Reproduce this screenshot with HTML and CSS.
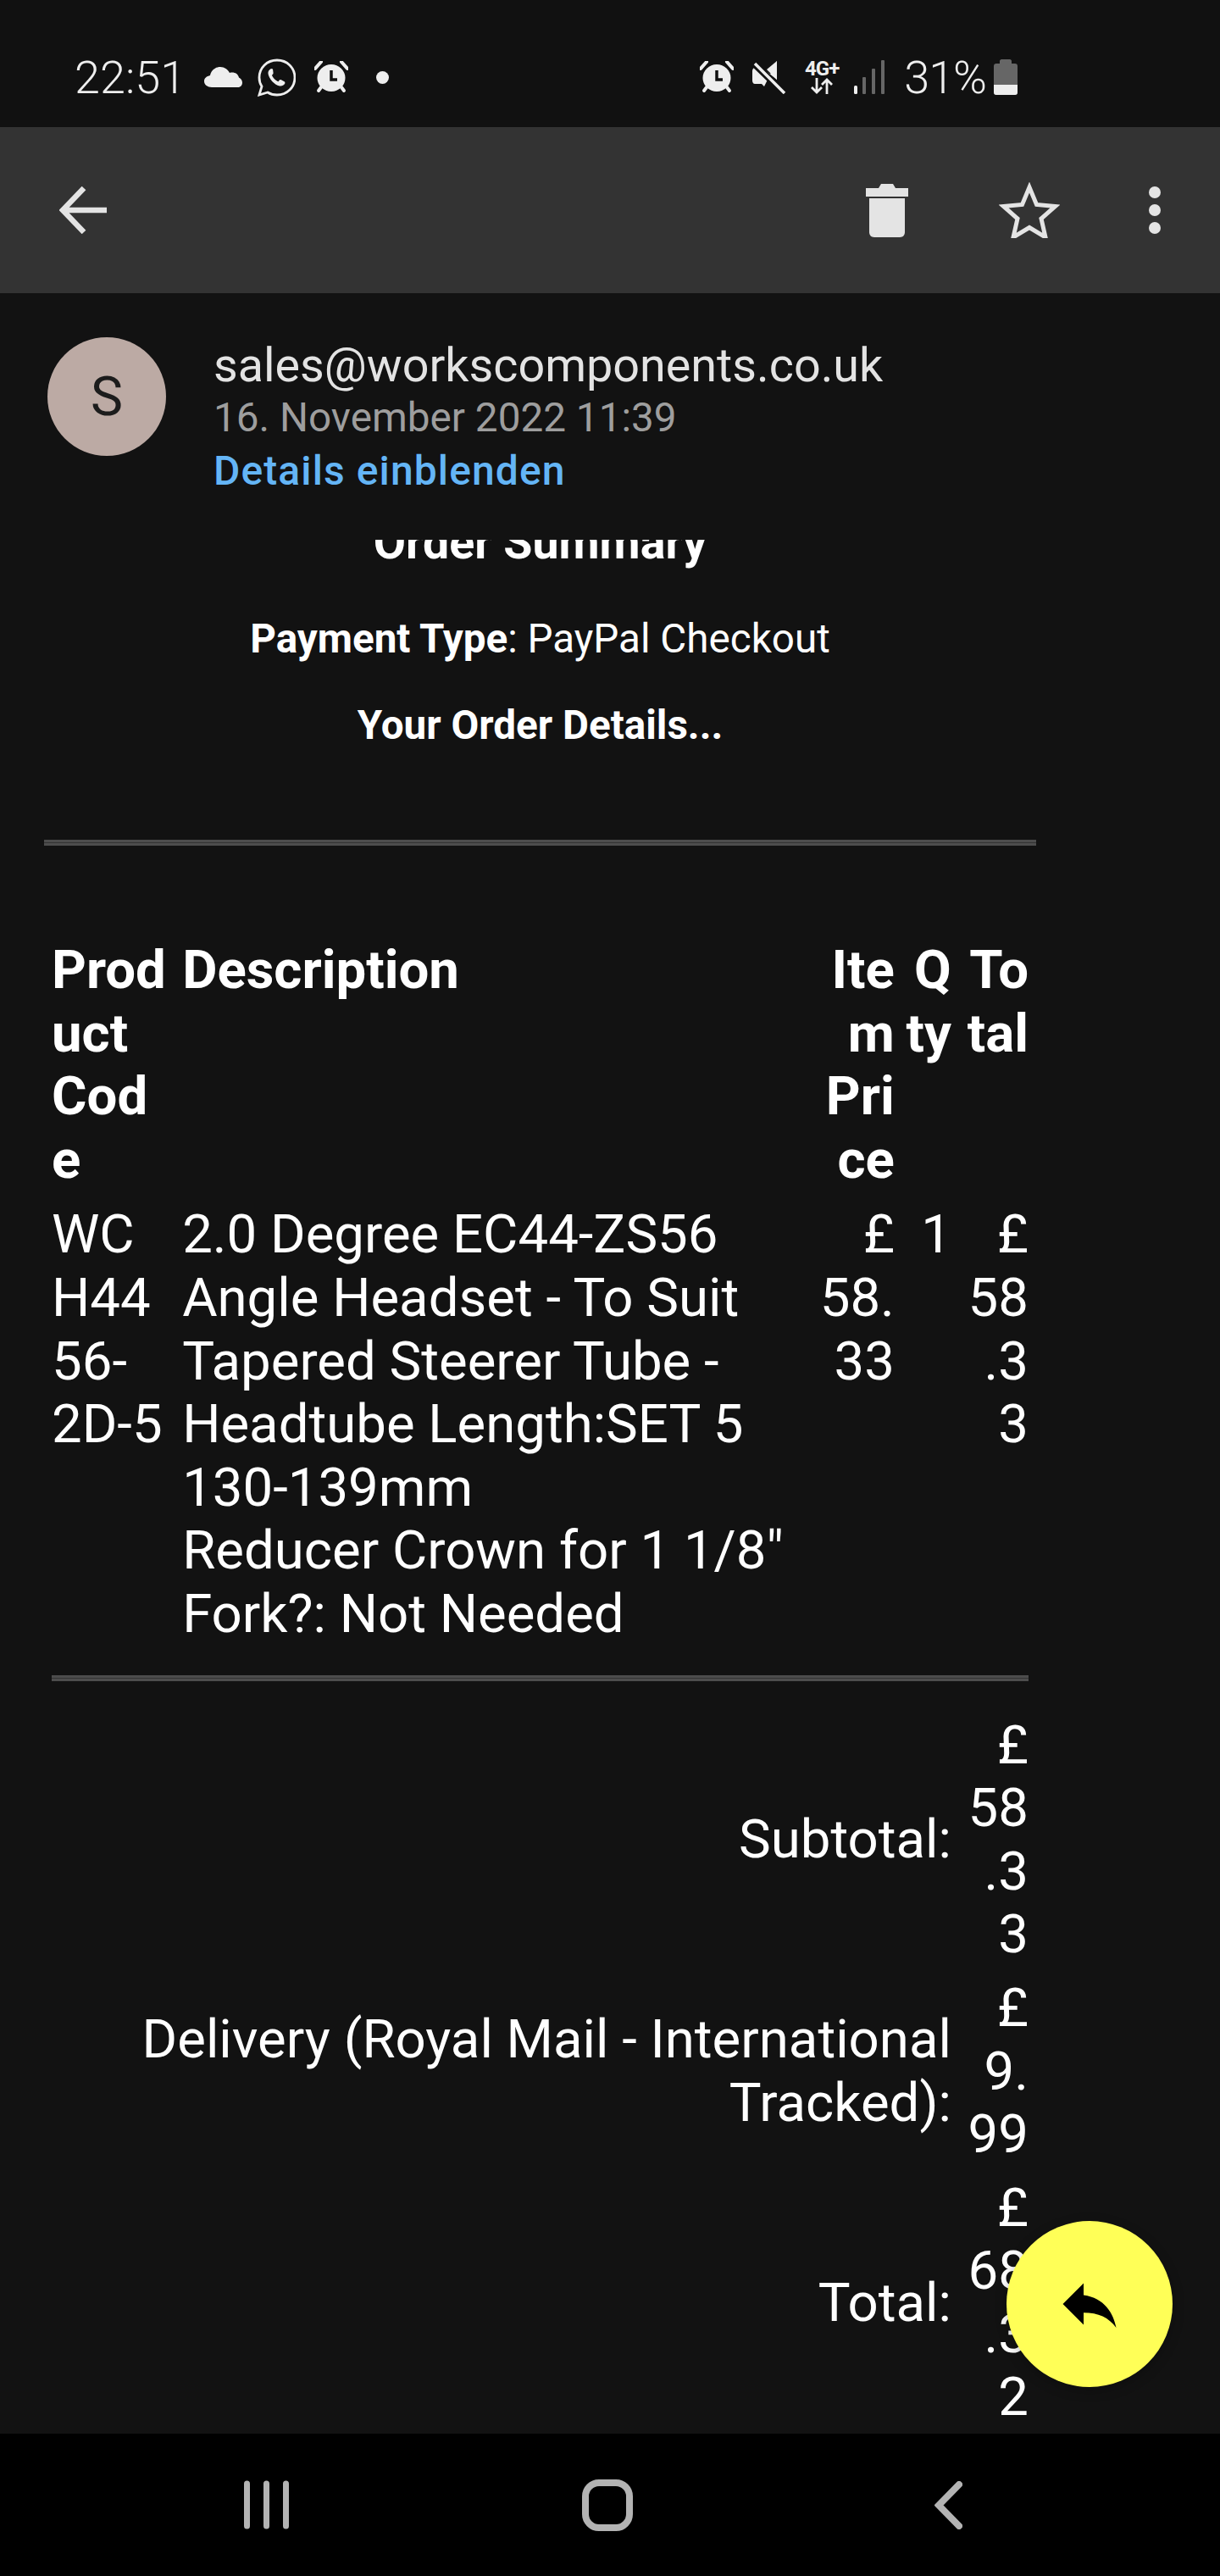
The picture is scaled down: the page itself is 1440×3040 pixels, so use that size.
FILE: index.html
```html
<!doctype html>
<html>
<head>
<meta charset="utf-8">
<title>sales@workscomponents.co.uk</title>
<link rel="stylesheet" href="styles.css">
</head>
<body>

<div class="phone">

  <!-- status bar -->
  <header class="status">
    <div class="status-left">
      <span class="clock">22:51</span>
      <svg class="ic-cloud" viewBox="0 0 45 24"><path d="M9 24C4 24 0 21 0 17c0-4 3-6 7-7C8 4 13 0 19 0c5 0 9 3 11 7 1-.5 2-.5 3-.5 4 0 7 2 8 6 2 1 4 3 4 6 0 3-2 5.500-5 5.500z" fill="#eee"/></svg>
      <svg class="ic-whatsapp" viewBox="0 0 45 45"><path d="M2 43l3-10C3 30 2 26 2 22.500 2 11 11 2 23 2s21 9 21 20.500S35 43 23 43c-4 0-8-1-11-3z" fill="none" stroke="#eee" stroke-width="2.800"/><path d="M16 12c-2 1-4 3-3.500 6 1 6 7 13 13.500 14.500 3 .5 5.500-1 6.500-3.500l-.5-1.500-4.500-2.500-1.500.3-1.500 2c-3-1-6.500-4.500-7.500-7.500l1.500-1.800v-1.500L18 12.500z" fill="#eee"/></svg>
      <svg class="ic-alarm" viewBox="0 0 40 39"><use href="#alarm-shape"/></svg>
      <span class="status-dot"></span>
    </div>
    <div class="status-right">
      <svg class="ic-alarm" viewBox="0 0 40 39">
        <g id="alarm-shape">
          <path d="M1 9L8 1M39 9L32 1" stroke="#eee" stroke-width="4" stroke-linecap="round"/>
          <path d="M5 35l3-4M35 35l-3-4" stroke="#eee" stroke-width="4" stroke-linecap="round"/>
          <ellipse cx="20" cy="20" rx="16.500" ry="16" fill="#eee"/>
          <path d="M20 11v11h7" fill="none" stroke="#111" stroke-width="3.500"/>
        </g>
      </svg>
      <svg class="ic-mute" viewBox="0 0 40 39"><path d="M29 0v22L10 7 9 8H3C1 8 0 10 0 12v11c0 2 1 4 3 4h8l3 3zM29 0L17 9z" fill="#eee"/><path d="M29 0L17 10l12 12z" fill="#eee"/><path d="M2 3l36 35" stroke="#111" stroke-width="8"/><path d="M3 3l35 35" stroke="#eee" stroke-width="3.500"/></svg>
      <div class="net">
        <span class="net-label">4G+</span>
        <svg viewBox="0 0 30 19"><path d="M9 0v17M3 11l6 6 6-6M21 19V2M15 8l6-6 6 6" fill="none" stroke="#eee" stroke-width="2.800"/></svg>
      </div>
      <svg class="ic-signal" viewBox="0 0 36 40"><rect x="0" y="30" width="4" height="10" rx="1.500" fill="#eee"/><rect x="10" y="20" width="4" height="20" rx="1" fill="#666"/><rect x="21" y="10" width="4" height="30" rx="1" fill="#666"/><rect x="32" y="0" width="4" height="40" rx="1" fill="#666"/></svg>
      <span class="battery-pct">31%</span>
      <svg class="ic-battery" viewBox="0 0 28 42"><path d="M9 0h10c1 0 2 1 2 2v3h4c2 0 3 1 3 3v31c0 2-1 3-3 3H3c-2 0-3-1-3-3V8c0-2 1-3 3-3h4V2c0-1 1-2 2-2z" fill="#666"/><path d="M0 30h28v9c0 2-1 3-3 3H3c-2 0-3-1-3-3z" fill="#eee"/></svg>
    </div>
  </header>

  <!-- toolbar -->
  <nav class="toolbar">
    <svg class="ic-back" viewBox="0 0 56 56"><path d="M56 28H4M29 2L4 28l25 26" fill="none" stroke="#e4e4e4" stroke-width="6.500"/></svg>
    <div class="toolbar-actions">
      <svg class="ic-trash" viewBox="0 0 50 63"><path d="M0 5h15l3-5h14l3 5h15v10H0zM4 17h42v40c0 3-2 6-6 6H10c-4 0-6-3-6-6z" fill="#e4e4e4"/></svg>
      <svg class="ic-star" viewBox="0 0 72 66"><path d="M36 6l8.500 20.500 22 2-16.500 14.500 5 22-19-11.500-19 11.500 5-22L5.500 28.500l22-2z" fill="none" stroke="#e4e4e4" stroke-width="5"/></svg>
      <div class="more"><span></span><span></span><span></span></div>
    </div>
  </nav>

  <!-- sender block, sits on top of the scrolled mail -->
  <section class="mail-head">
    <div class="avatar">S</div>
    <div class="sender">
      <div class="sender-mail">sales@workscomponents.co.uk</div>
      <div class="sender-date">16. November 2022 11:39</div>
      <div class="sender-link">Details einblenden</div>
    </div>
  </section>

  <!-- mail body, scrolled so the heading is cut off -->
  <main class="mail-body">
    <div class="mail-content">
      <h2 class="order-title">Order Summary</h2>
      <p class="order-line"><b>Payment Type</b>: PayPal Checkout</p>
      <p class="order-line"><b>Your Order Details...</b></p>
      <hr class="rule rule-wide">

      <table class="order">
        <colgroup>
          <col class="col-code"><col class="col-desc"><col class="col-price"><col class="col-qty"><col class="col-total">
        </colgroup>
        <tr class="head">
          <th class="left">Product Code</th>
          <th class="left">Description</th>
          <th>Item Price</th>
          <th>Qty</th>
          <th>Total</th>
        </tr>
        <tr>
          <td class="left">WCH4456-2D-5</td>
          <td class="left">2.0 Degree EC44-ZS56 Angle Headset - To Suit Tapered Steerer Tube - Headtube Length:SET 5 130-139mm<br>Reducer Crown for 1 1/8" Fork?: Not Needed</td>
          <td>£ 58.33</td>
          <td>1</td>
          <td>£ 58.33</td>
        </tr>
        <tr>
          <td colspan="5" class="rule-cell"><hr class="rule"></td>
        </tr>
        <tr class="sum">
          <td colspan="4">Subtotal:</td>
          <td>£ 58.33</td>
        </tr>
        <tr class="sum">
          <td colspan="4">Delivery (Royal Mail - International Tracked):</td>
          <td>£ 9.99</td>
        </tr>
        <tr class="sum">
          <td colspan="4">Total:</td>
          <td>£ 68.32</td>
        </tr>
      </table>
    </div>

    <button class="fab">
      <svg viewBox="0 0 24 24"><path d="M10 9V5l-7 7 7 7v-4.100c5 0 8.500 1.600 11 5.100-1-5-4-10-11-11z" fill="#000"/></svg>
    </button>
  </main>

  <!-- android nav bar -->
  <footer class="navbar">
    <svg class="ic-recents" viewBox="0 0 53 58"><path d="M3.500 4v50M26.500 4v50M49.500 4v50" stroke="#b3b3b3" stroke-width="7" stroke-linecap="round"/></svg>
    <svg class="ic-home" viewBox="0 0 60 61"><rect x="4" y="4" width="52" height="53" rx="16" fill="none" stroke="#b3b3b3" stroke-width="8"/></svg>
    <svg class="ic-chev" viewBox="0 0 33 57"><path d="M29 4L5 28.500 29 53" fill="none" stroke="#b3b3b3" stroke-width="8" stroke-linecap="round" stroke-linejoin="miter"/></svg>
  </footer>

</div>

</body>
</html>
```

FILE: styles.css
```css
/* ---------- page ---------- */
html,body{margin:0;padding:0;background:#121212}
body{font-family:Roboto,"Noto Sans",sans-serif;color:#fff}

.phone{
  width:1440px;height:3040px;
  display:flex;flex-direction:column;
  overflow:hidden;
}

/* ---------- status bar ---------- */
.status{
  height:150px;flex:none;
  background:#111;
  display:flex;align-items:center;justify-content:space-between;
  padding:32px 239px 0 88px;
  box-sizing:border-box;
  color:#eee;
}
.status-left,.status-right{display:flex;align-items:center}
.clock{font-size:54px;font-weight:300;margin-right:22px}
.ic-cloud{width:45px;height:24px;margin-right:18px}
.ic-whatsapp{width:45px;height:45px;margin-right:22px}
.ic-alarm{width:40px;height:39px}
.status-dot{width:15px;height:15px;border-radius:50%;background:#eee;margin-left:33px}

.ic-mute{width:40px;height:39px;margin-left:22px}
.net{width:42px;margin-left:21px;display:flex;flex-direction:column;align-items:center}
.net-label{font-size:24px;font-weight:700;line-height:20px;letter-spacing:-1px}
.net svg{width:30px;height:19px;margin-top:1px}
.ic-signal{width:36px;height:40px;margin-left:17px}
.battery-pct{font-size:54px;font-weight:300;margin-left:23px;letter-spacing:-1px}
.ic-battery{width:28px;height:42px;margin-left:9px}

/* ---------- toolbar ---------- */
.toolbar{
  height:196px;flex:none;
  background:#333;
  display:flex;align-items:center;justify-content:space-between;
  padding:0 70px;
  box-sizing:border-box;
}
.ic-back{width:56px;height:56px}
.toolbar-actions{display:flex;align-items:center}
.ic-trash{width:50px;height:63px;margin-right:107px}
.ic-star{width:72px;height:66px;margin-right:105px}
.more{display:flex;flex-direction:column;gap:7px}
.more span{display:block;width:14px;height:14px;border-radius:50%;background:#e4e4e4}

/* ---------- sender ---------- */
.mail-head{
  height:291px;flex:none;
  background:#121212;
  display:flex;align-items:flex-start;
  padding:52px 0 0 56px;
  box-sizing:border-box;
}
.avatar{
  width:140px;height:140px;flex:none;
  border-radius:50%;
  background:#bcaaa4;color:#1c1c1c;
  display:flex;align-items:center;justify-content:center;
  font-size:64px;
}
.sender{margin-left:56px;margin-top:2px}
.sender-mail{font-size:55.7px;line-height:62px;color:#e3e3e3}
.sender-date{font-size:47.7px;line-height:62px;color:#9e9e9e}
.sender-link{font-size:48px;line-height:64px;font-weight:500;color:#64b5f6;letter-spacing:1.100px}

/* ---------- mail body ---------- */
.mail-body{flex:1;position:relative;overflow:hidden;background:#121212}
.mail-content{width:1171px;margin-left:52px}

.order-title{
  margin:-26px 0 0;
  font-size:55.5px;line-height:60px;font-weight:700;
  text-align:center;
}
.order-line{
  margin:0;
  font-size:47.6px;line-height:54px;
  text-align:center;
}
.order-title + .order-line{margin-top:56px}
.order-line + .order-line{margin-top:48px}

.rule{
  margin:0;height:1px;
  border:0;
  border-top:3px solid #4d4d4d;
  border-bottom:3px solid #4d4d4d;
  background:#333;
}
.rule-wide{margin-top:108px}

/* ---------- order table ---------- */
.order{
  width:1171px;
  margin-top:101px;
  table-layout:fixed;
  border-collapse:separate;border-spacing:6px;
  font-size:63.5px;line-height:74.6px;
}
.order th,.order td{
  padding:3px;
  text-align:right;vertical-align:top;
  overflow-wrap:anywhere;
}
.order th{font-weight:700}
.order .head th{padding-bottom:5px}
.order .left{text-align:left}
.col-code{width:148px}
.col-desc{width:743px}
.col-price{width:97px}
.col-qty{width:61px}
.col-total{width:85px}

.sum td{vertical-align:middle}
.sum td:last-child{vertical-align:top}
.order .rule-cell{padding:25px 3px 30px}

/* ---------- reply button ---------- */
.fab{
  position:absolute;left:1188px;top:1984px;
  width:196px;height:196px;
  padding:0;border:0;border-radius:50%;
  background:#ffff57;
  box-shadow:0 4px 14px rgba(0,0,0,.25);
  display:flex;align-items:center;justify-content:center;
}
.fab svg{width:84px;height:84px}

/* ---------- nav bar ---------- */
.navbar{
  height:168px;flex:none;
  background:#000;
  display:flex;align-items:center;
  padding:0 0 0 288px;
  box-sizing:border-box;
}
.ic-recents{width:53px;height:58px;margin-right:346px}
.ic-home{width:60px;height:61px;margin-right:356px}
.ic-chev{width:33px;height:57px}
```
